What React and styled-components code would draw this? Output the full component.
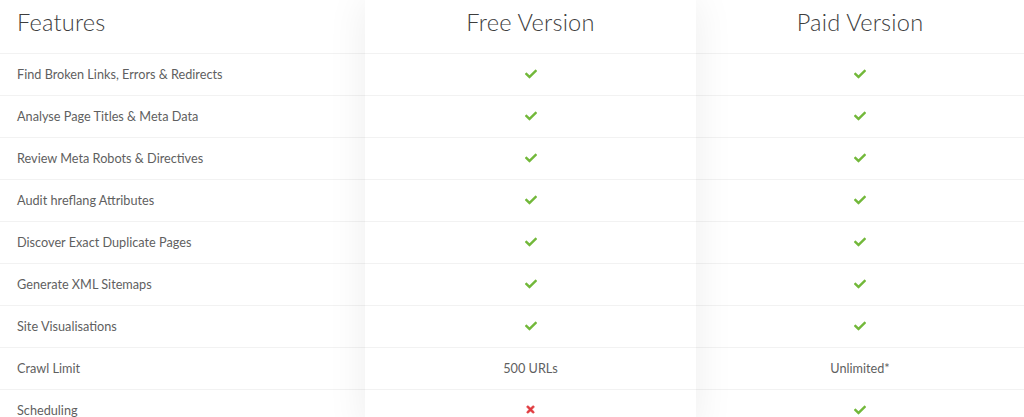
import React from 'react';
import styled, { createGlobalStyle } from 'styled-components';
import { FaCheck, FaTimes } from 'react-icons/fa';

const GlobalStyle = createGlobalStyle`
  html, body {
    margin: 0;
    padding: 0;
    background: #ffffff;
  }
  body {
    font-family: Lato, "Open Sans", "Liberation Sans", sans-serif;
    color: #555555;
    overflow: hidden;
  }
`;

const Table = styled.div`
  display: grid;
  grid-template-columns: 365px 331px 1fr;
  width: 1024px;
`;

const Column = styled.div`
  position: relative;
  background: #ffffff;
  z-index: ${props => (props.raised ? 2 : 1)};
  box-shadow: ${props =>
    props.raised ? '0 0 38px rgba(0, 0, 0, 0.075)' : 'none'};
`;

const HeaderCell = styled.div`
  height: 54px;
  box-sizing: border-box;
  border-bottom: 1px solid #f2f2f2;
  display: flex;
  align-items: center;
  justify-content: ${props => (props.left ? 'flex-start' : 'center')};
  padding: 0 0 10px ${props => (props.left ? '17px' : '0')};
  font-size: 23.6px;
  font-weight: 300;
  color: #3d3d3d;
  letter-spacing: 0.2px;
`;

const Cell = styled.div`
  height: 42px;
  box-sizing: border-box;
  border-bottom: 1px solid #f2f2f2;
  display: flex;
  align-items: center;
  justify-content: ${props => (props.left ? 'flex-start' : 'center')};
  padding: 0 0 2px ${props => (props.left ? '17px' : '0')};
  font-size: 12.7px;
  color: #5f5f5f;
`;

const Check = styled(FaCheck)`
  color: #72b83a;
  width: 12px;
  height: 12px;
`;

const Cross = styled(FaTimes)`
  color: #e0393e;
  width: 11px;
  height: 11px;
  stroke: #e0393e;
  stroke-width: 30px;
`;

const rows = [
  ['Find Broken Links, Errors & Redirects', true, true],
  ['Analyse Page Titles & Meta Data', true, true],
  ['Review Meta Robots & Directives', true, true],
  ['Audit hreflang Attributes', true, true],
  ['Discover Exact Duplicate Pages', true, true],
  ['Generate XML Sitemaps', true, true],
  ['Site Visualisations', true, true],
  ['Crawl Limit', '500 URLs', 'Unlimited*'],
  ['Scheduling', false, true]
];

function renderValue(value) {
  if (value === true) return <Check />;
  if (value === false) return <Cross />;
  return value;
}

export default function App() {
  return (
    <>
      <GlobalStyle />
      <Table>
        <Column>
          <HeaderCell left>Features</HeaderCell>
          {rows.map(row => (
            <Cell left key={row[0]}>
              {row[0]}
            </Cell>
          ))}
        </Column>
        <Column raised>
          <HeaderCell>Free Version</HeaderCell>
          {rows.map(row => (
            <Cell key={row[0]}>{renderValue(row[1])}</Cell>
          ))}
        </Column>
        <Column>
          <HeaderCell>Paid Version</HeaderCell>
          {rows.map(row => (
            <Cell key={row[0]}>{renderValue(row[2])}</Cell>
          ))}
        </Column>
      </Table>
    </>
  );
}
